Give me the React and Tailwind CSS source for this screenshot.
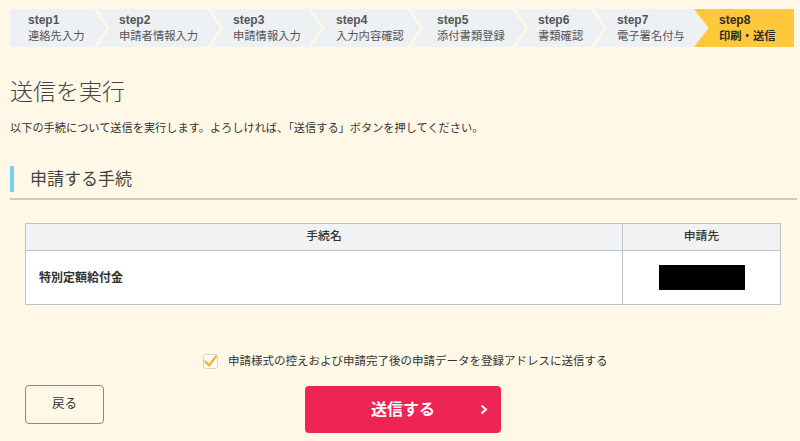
const steps = [
  { no: "step1", label: "連絡先入力", w: "w-[84px]", pl: "pl-[18px]" },
  { no: "step2", label: "申請者情報入力", w: "w-[99px]", pl: "pl-[10px]" },
  { no: "step3", label: "申請情報入力", w: "w-[86px]", pl: "pl-[10px]" },
  { no: "step4", label: "入力内容確認", w: "w-[84px]", pl: "pl-[12px]" },
  { no: "step5", label: "添付書類登録", w: "w-[90px]", pl: "pl-[14px]" },
  { no: "step6", label: "書類確認", w: "w-[63px]", pl: "pl-[10px]" },
  { no: "step7", label: "電子署名付与", w: "w-[88px]", pl: "pl-[11px]" },
  { no: "step8", label: "印刷・送信", w: "w-[85px]", pl: "pl-[10px]", active: true },
];

function Separator({ active }) {
  // chevron between two steps
  if (active) {
    return (
      <svg width="15" height="38" viewBox="0 0 15 38" className="block shrink-0">
        <rect width="15" height="38" fill="#ffc83a" />
        <polygon points="0,0 14.5,19 0,38" fill="#eef1f4" />
      </svg>
    );
  }
  return (
    <svg width="15" height="38" viewBox="0 0 15 38" className="block shrink-0">
      <rect width="15" height="38" fill="#eef1f4" />
      <polyline points="0.5,-1 14,19 0.5,39" fill="none" stroke="#fff8e6" strokeWidth="2.6" />
    </svg>
  );
}

function StepBar() {
  return (
    <div className="ml-[10px] mt-[9px] flex h-[38px] w-[783px]">
      {steps.map((s, i) => (
        <div key={s.no} className="flex">
          {i > 0 && <Separator active={s.active} />}
          <div
            className={`${s.w} ${s.pl} flex h-[38px] flex-col justify-center whitespace-nowrap ${
              s.active ? "bg-[#ffc83a] text-[#2b2b2b]" : "bg-[#eef1f4] text-[#555]"
            }`}
          >
            <div className="text-[12px] font-bold leading-[16px]">{s.no}</div>
            <div className={`text-[11.3px] leading-[16px] ${s.active ? "font-bold" : ""}`}>{s.label}</div>
          </div>
        </div>
      ))}
    </div>
  );
}

export default function App() {
  return (
    <div
      className="h-[441px] w-full overflow-hidden bg-[#fff8e6] text-[#333]"
      style={{ fontFamily: '"Liberation Sans", "Noto Sans CJK JP", sans-serif' }}
    >
      <StepBar />

      <h1 className="ml-[10px] mt-[29px] text-[23px] font-light leading-[32px] text-[#444]">送信を実行</h1>
      <p className="ml-[10px] mt-[12px] text-[11.2px] leading-[16px] text-[#333]">
        以下の手続について送信を実行します。よろしければ、「送信する」ボタンを押してください。
      </p>

      <div className="ml-[10px] mt-[30px] flex h-[26px] items-center border-l-[4px] border-[#72d2f6] pl-[16px]">
        <h2 className="pt-[2px] text-[17px] leading-[26px] text-[#444]">申請する手続</h2>
      </div>
      <div className="ml-[10px] mr-[3px] mt-[6px] h-[2px] bg-[#c9cbc4]" />

      <div className="ml-[25px] mt-[23px] grid w-[756px] grid-cols-[597px_1fr] grid-rows-[27px_53px] border border-[#b9c3ca] bg-white">
        <div className="flex items-center justify-center border-b border-r border-[#b9c3ca] bg-[#f0f2f4] text-[11.8px] font-medium">
          手続名
        </div>
        <div className="flex items-center justify-center border-b border-[#b9c3ca] bg-[#f0f2f4] text-[11.8px] font-medium">
          申請先
        </div>
        <div className="flex items-center border-r border-[#b9c3ca] px-[13px] text-[12px] font-bold">
          特別定額給付金
        </div>
        <div className="flex items-center justify-center">
          <div className="h-[25px] w-[86px] bg-black" />
        </div>
      </div>

      <label className="ml-[203px] mt-[48px] flex h-[16px] items-center">
        <span className="flex h-[15px] w-[15px] items-center justify-center rounded-[3px] border border-[#d3d3d3] bg-white">
          <svg width="13" height="13" viewBox="0 0 13 13">
            <polyline points="1.5,6.5 5,10.5 11.8,1.5" fill="none" stroke="#f5b526" strokeWidth="2.4" strokeLinecap="round" strokeLinejoin="round" />
          </svg>
        </span>
        <span className="ml-[10px] text-[11.5px] leading-[16px] text-[#333]">
          申請様式の控えおよび申請完了後の申請データを登録アドレスに送信する
        </span>
      </label>

      <div className="mt-[16px] flex items-start">
        <button className="ml-[25px] h-[39px] w-[79px] rounded-[4px] border-[1.5px] border-[#7d8b93] bg-transparent text-[12.5px] text-[#333]">
          戻る
        </button>
        <button className="relative ml-[201px] mt-[1px] flex h-[47px] w-[196px] items-center justify-center rounded-[4px] bg-[#ee2455] text-[16px] font-bold text-white">
          送信する
          <svg width="8" height="11" viewBox="0 0 8 11" className="absolute right-[13px] top-[18px]">
            <polyline points="1.5,1.5 6,5.5 1.5,9.5" fill="none" stroke="white" strokeWidth="2" />
          </svg>
        </button>
      </div>
    </div>
  );
}
